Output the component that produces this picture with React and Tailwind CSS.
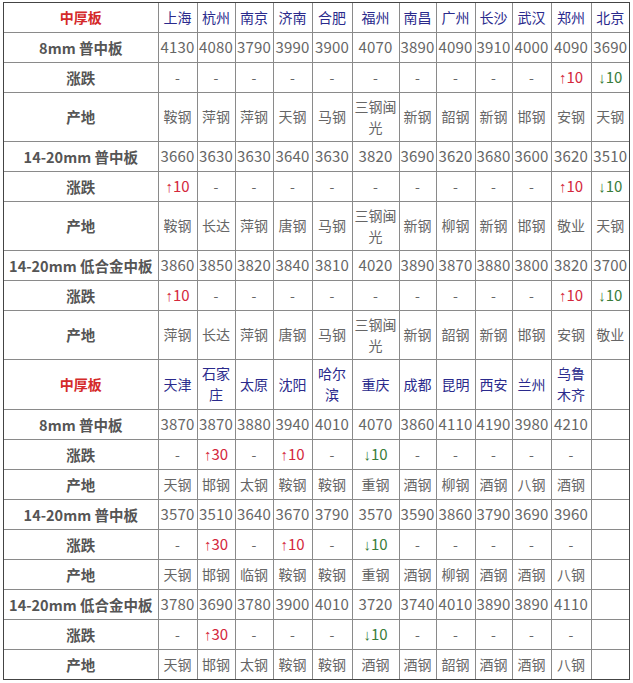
import React from "react";

const widths = [154, 39, 38, 38, 39, 40, 47, 37, 39, 37, 39, 40, 38];

const sections = [
  {
    cities: ["上海", "杭州", "南京", "济南", "合肥", "福州", "南昌", "广州", "长沙", "武汉", "郑州", "北京"],
    headH: "h-[29px]",
    rows: [
      { label: "8mm 普中板", values: ["4130", "4080", "3790", "3990", "3900", "4070", "3890", "4090", "3910", "4000", "4090", "3690"] },
      { label: "涨跌", values: ["-", "-", "-", "-", "-", "-", "-", "-", "-", "-", "+10", "-10"] },
      { label: "产地", tall: true, values: ["鞍钢", "萍钢", "萍钢", "天钢", "马钢", "三钢闽光", "新钢", "韶钢", "新钢", "邯钢", "安钢", "天钢"] },
      { label: "14-20mm 普中板", values: ["3660", "3630", "3630", "3640", "3630", "3820", "3690", "3620", "3680", "3600", "3620", "3510"] },
      { label: "涨跌", values: ["+10", "-", "-", "-", "-", "-", "-", "-", "-", "-", "+10", "-10"] },
      { label: "产地", tall: true, values: ["鞍钢", "长达", "萍钢", "唐钢", "马钢", "三钢闽光", "新钢", "柳钢", "新钢", "邯钢", "敬业", "天钢"] },
      { label: "14-20mm 低合金中板", values: ["3860", "3850", "3820", "3840", "3810", "4020", "3890", "3870", "3880", "3800", "3820", "3700"] },
      { label: "涨跌", values: ["+10", "-", "-", "-", "-", "-", "-", "-", "-", "-", "+10", "-10"] },
      { label: "产地", tall: true, values: ["萍钢", "长达", "萍钢", "唐钢", "马钢", "三钢闽光", "新钢", "韶钢", "新钢", "邯钢", "安钢", "敬业"] },
    ],
  },
  {
    cities: ["天津", "石家庄", "太原", "沈阳", "哈尔滨", "重庆", "成都", "昆明", "西安", "兰州", "乌鲁木齐", ""],
    headH: "h-[50px]",
    rows: [
      { label: "8mm 普中板", values: ["3870", "3870", "3880", "3940", "4010", "4070", "3860", "4110", "4190", "3980", "4210", ""] },
      { label: "涨跌", values: ["-", "+30", "-", "+10", "-", "-10", "-", "-", "-", "-", "-", ""] },
      { label: "产地", values: ["天钢", "邯钢", "太钢", "鞍钢", "鞍钢", "重钢", "酒钢", "柳钢", "酒钢", "八钢", "酒钢", ""] },
      { label: "14-20mm 普中板", values: ["3570", "3510", "3640", "3670", "3790", "3570", "3590", "3860", "3790", "3690", "3960", ""] },
      { label: "涨跌", values: ["-", "+30", "-", "+10", "-", "-10", "-", "-", "-", "-", "-", ""] },
      { label: "产地", values: ["天钢", "邯钢", "临钢", "鞍钢", "鞍钢", "重钢", "酒钢", "柳钢", "酒钢", "酒钢", "八钢", ""] },
      { label: "14-20mm 低合金中板", values: ["3780", "3690", "3780", "3900", "4010", "3720", "3740", "4010", "3890", "3890", "4110", ""] },
      { label: "涨跌", values: ["-", "+30", "-", "-", "-", "-10", "-", "-", "-", "-", "-", ""] },
      { label: "产地", values: ["天钢", "邯钢", "太钢", "鞍钢", "鞍钢", "酒钢", "酒钢", "韶钢", "酒钢", "酒钢", "八钢", ""] },
    ],
  },
];

// "+10" shows as red up arrow, "-10" as green down arrow
const Value = ({ v }) => {
  if (v.startsWith("+")) {
    return (
      <span className="text-[15px] text-[#d4283c]">
        <span className="font-['Liberation_Sans',sans-serif]">↑</span>
        {v.slice(1)}
      </span>
    );
  }
  if (v.startsWith("-") && v.length > 1) {
    return (
      <span className="text-[15px] text-[#3a7d3a]">
        <span className="font-['Liberation_Sans',sans-serif]">↓</span>
        {v.slice(1)}
      </span>
    );
  }
  if (/^\d+$/.test(v)) return <span className="text-[15px] tracking-[0.2px]">{v}</span>;
  return <span>{v}</span>;
};

export default function App() {
  return (
    <div className="pt-[2px] pl-[3px] bg-white font-['Noto_Sans_CJK_SC','Noto_Sans',sans-serif]">
      <div className="w-[627px] border border-[#444]">
        <table className="w-[625px] table-fixed border-collapse border-hidden text-[14px] leading-[21px]">
          <colgroup>
            {widths.map((w, i) => (
              <col key={i} style={{ width: w }} />
            ))}
          </colgroup>
          <tbody>
            {sections.map((sec, si) => (
              <React.Fragment key={si}>
                <tr className={sec.headH}>
                  <td className="border border-[#8a8a8a] text-center font-bold text-[#d42a2a]">中厚板</td>
                  {sec.cities.map((c, i) => (
                    <td key={i} className="border border-[#8a8a8a] text-center text-[#2a2a8c] px-[2px]">
                      {c}
                    </td>
                  ))}
                </tr>
                {sec.rows.map((row, ri) => (
                  <tr key={ri} className={row.tall ? "h-[49px]" : "h-[30px]"}>
                    <td className="border border-[#8a8a8a] text-center font-bold text-[14.5px] text-[#555] whitespace-nowrap">
                      {row.label}
                    </td>
                    {row.values.map((v, i) => (
                      <td key={i} className="border border-[#8a8a8a] text-center text-[#666] px-0 whitespace-normal">
                        <Value v={v} />
                      </td>
                    ))}
                  </tr>
                ))}
              </React.Fragment>
            ))}
          </tbody>
        </table>
      </div>
    </div>
  );
}
